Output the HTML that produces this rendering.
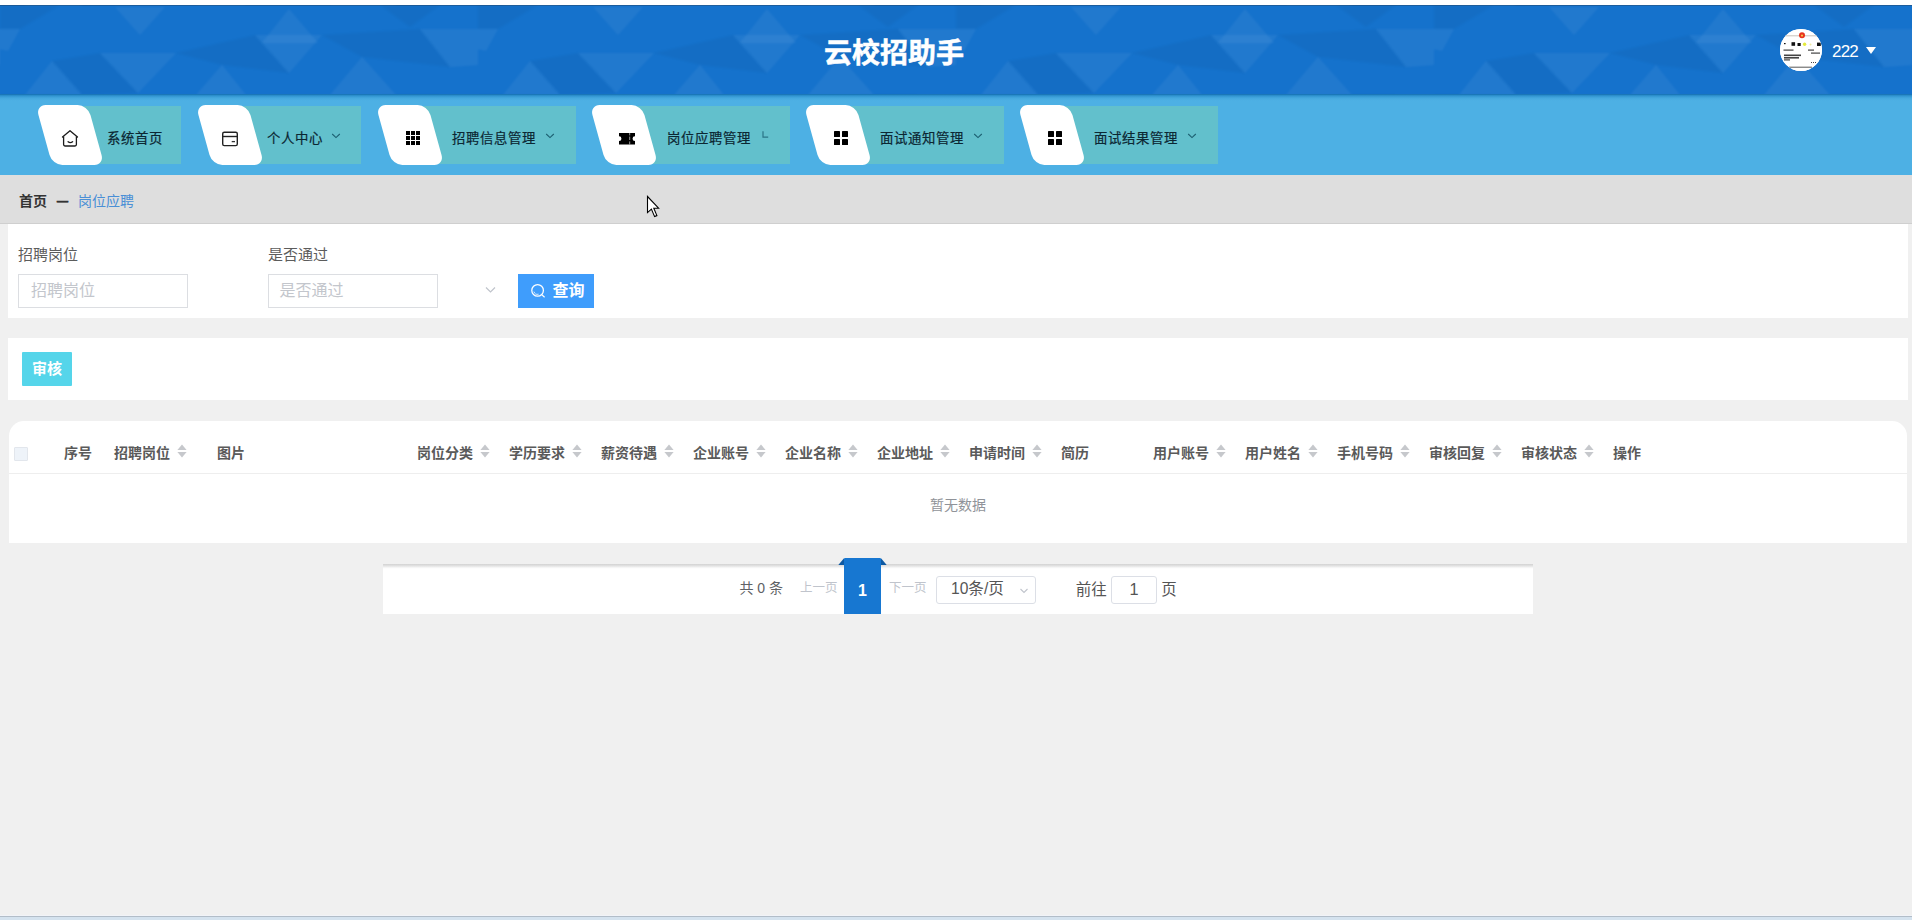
<!DOCTYPE html>
<html lang="zh-CN">
<head>
<meta charset="utf-8">
<title>云校招助手</title>
<style>
*{box-sizing:border-box;margin:0;padding:0}
html,body{width:1912px;height:920px;overflow:hidden;background:#f0f0f0}
body{position:relative;font-family:"Liberation Sans","Noto Sans CJK SC",sans-serif;color:#333;font-size:14px}
.abs{position:absolute}
#topstrip{left:0;top:0;width:1912px;height:5px;background:#fff}
#header{left:0;top:5px;width:1912px;height:90px;background:#1572cc;overflow:hidden;box-shadow:inset 0 1px 0 #1b5c9c}
#header svg{position:absolute;left:0;top:0}
#title{left:0;top:7.5px;-webkit-text-stroke:0.5px #fff;width:1788px;height:90px;line-height:92px;text-align:center;color:#fff;font-size:28px;font-weight:bold;letter-spacing:0}
#avatar{left:1780px;top:29px;width:42px;height:42px;border-radius:50%;background:#fff;overflow:hidden}
#uname{left:1832px;top:38.7px;color:#fff;font-size:17px;line-height:26px;letter-spacing:-0.8px}
#caret{left:1866px;top:46.7px;width:0;height:0;border-left:5px solid transparent;border-right:5px solid transparent;border-top:7px solid #fff}
#menubar{left:0;top:94px;width:1912px;height:81px;background:#4db0e4}
#menushadow{left:0;top:94px;width:1912px;height:8px;background:linear-gradient(rgba(14,104,172,.95),rgba(30,130,195,.62) 22%,rgba(50,150,210,.32) 50%,rgba(70,165,220,.1) 78%,rgba(77,176,228,0))}
.mi{position:absolute;top:105px;height:60px}
.mi .teal{position:absolute;left:45px;top:0.6px;right:0;height:58px;background:#62c0cc}
.mi .para{position:absolute;left:6px;top:0;width:52.4px;height:60px;background:#fff;border-radius:10px;transform:skewX(15.5deg)}
.mi .ico{position:absolute;left:22px;top:23.5px;width:20px;height:20px}
.mi .txt{position:absolute;left:69px;top:24px;font-size:13.4px;letter-spacing:0.6px;line-height:20px;color:#0c2733;white-space:nowrap;-webkit-text-stroke:0.2px #0c2733}
.mi .arr{position:absolute;top:27px;width:10px;height:8px}
#crumb{left:0;top:175px;width:1912px;height:49px;background:#dedede;border-bottom:1px solid #cfcfcf}
#crumb .c1{position:absolute;left:19px;top:16px;font-size:14px;line-height:20px;font-weight:bold;color:#333}
#crumb .c2{position:absolute;left:57px;top:16.3px;font-size:11px;line-height:20px;font-weight:bold;color:#333;-webkit-text-stroke:0.7px #333}
#crumb .c3{position:absolute;left:78px;top:16px;font-size:14px;line-height:20px;color:#4a8fd6}
#search{left:8px;top:224px;width:1900px;height:94px;background:#fff}
.lbl{position:absolute;font-size:15px;line-height:20px;color:#5c5c5c}
.inp{position:absolute;height:34px;border:1px solid #dcdee2;background:#fff;font-size:16px;line-height:32px;color:#c3c6cc;padding-left:12px}
#qbtn{left:518px;top:274px;width:76px;height:34px;background:#3f9dfc;color:#fff;font-size:16px;font-weight:bold;line-height:33px}
#actions{left:8px;top:338px;width:1900px;height:62px;background:#fff}
#sh{left:22px;top:352px;width:50px;height:34px;background:#55d5ea;color:#fff;font-size:15px;font-weight:bold;line-height:34.4px;text-align:center;border-radius:1px}
#table{left:9px;top:421px;width:1898px;height:122px;background:#fff;border-radius:15px 15px 0 0}
#thline{left:9px;top:473px;width:1898px;height:1px;background:#eeeeee}
.th{position:absolute;top:443px;font-size:14px;line-height:20px;font-weight:bold;color:#5a5a5a;white-space:nowrap}
.sort{position:absolute;top:444.3px;width:10px;height:14px}
#cb{left:14px;top:447px;width:14px;height:14px;border:1px solid #e2e6ec;background:#eef3f9;border-radius:1px}
#empty{left:9px;top:495px;width:1898px;text-align:center;font-size:14px;line-height:20px;color:#909399}
#pager{left:383px;top:564px;width:1150px;height:50px;background:linear-gradient(#d3d3d3,#dcdcdc 1.2px,#ededed 2.8px,#fbfbfb 4px,#fff 5px)}
.pg{position:absolute;font-size:14px;line-height:20px;white-space:nowrap}
#pcur{left:844px;top:558px;width:37px;height:56px;background:#1777d1;border-radius:1px 1px 0 0;color:#fff;font-size:16px;font-weight:bold;text-align:center;line-height:66.4px}
#psel{left:936px;top:576px;width:100px;height:28px;border:1px solid #dcdfe6;border-radius:3px;background:#fff;font-size:15.6px;line-height:24px;color:#555}
#pinp{left:1111px;top:576px;width:46px;height:28px;border:1px solid #dcdfe6;border-radius:3px;background:#fff;font-size:16.3px;line-height:25.4px;color:#555;text-align:center}
#botline{left:0;top:915px;width:1912px;height:2px;background:linear-gradient(#f1f3f8 0,#f1f3f8 50%,#b2bdc8 50%)}
#botstrip{left:0;top:917px;width:1912px;height:3px;background:#d4e2ee}
</style>
</head>
<body>
<div class="abs" id="topstrip"></div>
<div class="abs" id="header"><svg width="1912" height="90" viewBox="0 0 1912 90"><defs><pattern id="tp" width="478" height="90" patternUnits="userSpaceOnUse"><g fill="#fff" fill-opacity="0.055"><path d="M25 90L52 56L82 90Z"/><path d="M100 48H176L138 88Z"/><path d="M255 30H322L289 68Z"/><path d="M262 38L289 4L318 38Z"/><path d="M115 2H165L140 30Z"/><path d="M420 24H478V60L450 62Z"/><path d="M0 24H20L8 46L0 44Z"/><path d="M330 90L362 52L396 90Z"/><path d="M196 90L222 60L246 90Z"/></g><g fill="#000" fill-opacity="0.035"><path d="M52 56L100 48L138 88L82 90Z"/><path d="M176 48L255 30L289 68L222 60Z"/><path d="M322 30L420 24L450 62L362 52Z"/><path d="M0 0H60L20 24H0Z"/><path d="M380 0H440L410 22Z"/></g></pattern></defs><rect x="-10" y="-10" width="1932" height="110" fill="url(#tp)" style="filter:blur(1.3px)"/></svg></div>
<div class="abs" id="title">云校招助手</div>
<div class="abs" id="avatar"><svg width="42" height="42" viewBox="0 0 42 42"><rect width="42" height="42" fill="#fff"/><path d="M4 6.8H38" stroke="#b9b2a8" stroke-width="0.8"/><circle cx="22" cy="6.3" r="3" fill="#e8341c"/><circle cx="22" cy="6.6" r="1.1" fill="#f6c04a"/><g fill="#111"><rect x="4" y="14" width="1.6" height="1.2"/><rect x="11.5" y="13.2" width="3.6" height="3.6"/><rect x="17.5" y="14" width="3.2" height="3"/><rect x="37" y="13.6" width="3.8" height="3.4"/></g><circle cx="24.6" cy="15.2" r="1.7" fill="#e4ea3c"/><circle cx="30.5" cy="15.4" r="1" fill="#efe9a0"/><g fill="#444"><rect x="3.5" y="20.5" width="10" height="1.2"/><rect x="28" y="20.5" width="6" height="1.2"/><rect x="31" y="23.5" width="9" height="1.2"/><rect x="4" y="25.5" width="17" height="1.6"/><rect x="4" y="28" width="15" height="1.6"/><rect x="4" y="30.3" width="6" height="1.2"/><rect x="31" y="33" width="1" height="1"/><rect x="33" y="33" width="1" height="1"/><rect x="35" y="33" width="1" height="1"/></g><path d="M9 38.2H32" stroke="#444" stroke-width="0.9"/></svg></div>
<div class="abs" id="uname">222</div>
<div class="abs" id="caret"></div>
<div class="abs" id="menubar"></div>
<div class="abs" id="menushadow"></div>

<div class="mi" style="left:38px;width:143px"><div class="teal"></div><div class="para"></div><svg class="ico" style="left:22px" viewBox="0 0 20 20"><path d="M2.5 8.1L10 1.7L17.5 8.1" fill="none" stroke="#1c1c1c" stroke-width="1.3" stroke-linejoin="round" stroke-linecap="round"/><path d="M3.6 7.4V15.6Q3.6 17 5 17H15Q16.4 17 16.4 15.6V7.4" fill="none" stroke="#1c1c1c" stroke-width="1.3"/><path d="M8.1 12.7Q10.3 14.5 12.6 12.7" fill="none" stroke="#1c1c1c" stroke-width="1.3" stroke-linecap="round"/></svg><span class="txt" style="left:69px">系统首页</span></div>
<div class="mi" style="left:198px;width:163px"><div class="teal"></div><div class="para"></div><svg class="ico" style="left:22px" viewBox="0 0 20 20"><rect x="2.7" y="3.2" width="14.6" height="13.4" rx="1.6" fill="none" stroke="#222" stroke-width="1.4"/><path d="M2.7 7.5H17.3" stroke="#222" stroke-width="1.4"/><path d="M11.7 12.6H15" stroke="#333" stroke-width="1.3"/></svg><span class="txt" style="left:69px">个人中心</span><svg class="arr" style="left:133px" viewBox="0 0 10 8"><path d="M1.2 2L5 5.6L8.8 2" fill="none" stroke="#1d6072" stroke-width="1.1"/></svg></div>
<div class="mi" style="left:378px;width:198px"><div class="teal"></div><div class="para"></div><svg class="ico" style="left:25px;top:22.6px" viewBox="0 0 20 20"><g fill="#000"><rect x="3" y="3" width="4" height="4"/><rect x="8" y="3" width="4" height="4"/><rect x="13" y="3" width="4" height="4"/><rect x="3" y="8" width="4" height="4"/><rect x="8" y="8" width="4" height="4"/><rect x="13" y="8" width="4" height="4"/><rect x="3" y="13" width="4" height="4"/><rect x="8" y="13" width="4" height="4"/><rect x="13" y="13" width="4" height="4"/></g></svg><span class="txt" style="left:74px">招聘信息管理</span><svg class="arr" style="left:167px" viewBox="0 0 10 8"><path d="M1.2 2L5 5.6L8.8 2" fill="none" stroke="#1d6072" stroke-width="1.1"/></svg></div>
<div class="mi" style="left:592px;width:198px"><div class="teal"></div><div class="para"></div><svg class="ico" style="left:25px" viewBox="0 0 20 20"><path d="M2 3.9H18V7.2A2.45 2.45 0 0 0 18 12.1V15.4H2V12.1A2.45 2.45 0 0 0 2 7.2Z" fill="#000"/><path d="M12.7 3.9V6.4M12.7 7.6V11M12.7 12.4V15.4" stroke="#fff" stroke-opacity=".75" stroke-width="0.8"/></svg><span class="txt" style="left:75px">岗位应聘管理</span><svg class="arr" style="left:167.6px;top:25.8px" viewBox="0 0 10 8"><path d="M3 0.3V6.2H8.2" fill="none" stroke="#2a7486" stroke-width="1.2"/></svg></div>
<div class="mi" style="left:806px;width:198px"><div class="teal"></div><div class="para"></div><svg class="ico" style="left:25px;top:22.6px" viewBox="0 0 20 20"><g fill="#000"><rect x="3" y="3" width="6" height="6" rx="0.6"/><rect x="11" y="3" width="6" height="6" rx="0.6"/><rect x="3" y="11" width="6" height="6" rx="0.6"/><rect x="11" y="11" width="6" height="6" rx="0.6"/></g></svg><span class="txt" style="left:74px">面试通知管理</span><svg class="arr" style="left:167px" viewBox="0 0 10 8"><path d="M1.2 2L5 5.6L8.8 2" fill="none" stroke="#1d6072" stroke-width="1.1"/></svg></div>
<div class="mi" style="left:1020px;width:198px"><div class="teal"></div><div class="para"></div><svg class="ico" style="left:25px;top:22.6px" viewBox="0 0 20 20"><g fill="#000"><rect x="3" y="3" width="6" height="6" rx="0.6"/><rect x="11" y="3" width="6" height="6" rx="0.6"/><rect x="3" y="11" width="6" height="6" rx="0.6"/><rect x="11" y="11" width="6" height="6" rx="0.6"/></g></svg><span class="txt" style="left:74px">面试结果管理</span><svg class="arr" style="left:167px" viewBox="0 0 10 8"><path d="M1.2 2L5 5.6L8.8 2" fill="none" stroke="#1d6072" stroke-width="1.1"/></svg></div>

<div class="abs" id="crumb"><span class="c1">首页</span><span class="c2">—</span><span class="c3">岗位应聘</span></div>

<svg class="abs" style="left:646px;top:195px" width="16" height="24" viewBox="0 0 16 24"><path d="M1.5 1.5V17.6L5.4 14.1L8.6 21.6L10.9 20.6L7.8 13.2H12.6Z" fill="#fff" stroke="#000" stroke-width="1.1" stroke-linejoin="miter"/></svg>
<div class="abs" id="search"></div>
<span class="lbl" style="left:18px;top:245px">招聘岗位</span>
<span class="lbl" style="left:268px;top:245px">是否通过</span>
<div class="inp" style="left:18px;top:274px;width:170px">招聘岗位</div>
<div class="inp" style="left:268px;top:274px;width:170px;padding-left:10.4px">是否通过</div>
<div class="abs" id="qbtn"><svg style="position:absolute;left:12px;top:9px" width="16" height="16" viewBox="0 0 16 16"><circle cx="7.6" cy="7.4" r="5.8" fill="none" stroke="#fff" stroke-width="1.25"/><path d="M11.7 11.6L14.6 14.3" stroke="#fff" stroke-width="1.25" fill="none"/><path d="M3.9 8.6A3.9 3.9 0 0 0 8.6 11.2" stroke="#fff" stroke-width="0.9" fill="none" stroke-opacity=".85"/></svg><span style="position:absolute;left:34.4px;top:0">查询</span></div>
<svg class="abs" style="left:485px;top:286px" width="11" height="8" viewBox="0 0 11 8"><path d="M1 1.5L5.5 6L10 1.5" fill="none" stroke="#c0c4cc" stroke-width="1.2"/></svg>

<div class="abs" id="actions"></div>
<div class="abs" id="sh">审核</div>

<div class="abs" id="table"></div>
<div class="abs" id="thline"></div>
<div class="abs" id="cb"></div>
<span class="th" style="left:64px">序号</span>
<span class="th" style="left:114px">招聘岗位</span><svg class="sort" style="left:177px" viewBox="0 0 10 14"><path d="M5 0.5L9.6 6H0.4Z" fill="#c6c8cc"/><path d="M5 13.5L9.6 8H0.4Z" fill="#c6c8cc"/></svg>
<span class="th" style="left:217px">图片</span>
<span class="th" style="left:417px">岗位分类</span><svg class="sort" style="left:480px" viewBox="0 0 10 14"><path d="M5 0.5L9.6 6H0.4Z" fill="#c6c8cc"/><path d="M5 13.5L9.6 8H0.4Z" fill="#c6c8cc"/></svg>
<span class="th" style="left:509px">学历要求</span><svg class="sort" style="left:572px" viewBox="0 0 10 14"><path d="M5 0.5L9.6 6H0.4Z" fill="#c6c8cc"/><path d="M5 13.5L9.6 8H0.4Z" fill="#c6c8cc"/></svg>
<span class="th" style="left:601px">薪资待遇</span><svg class="sort" style="left:664px" viewBox="0 0 10 14"><path d="M5 0.5L9.6 6H0.4Z" fill="#c6c8cc"/><path d="M5 13.5L9.6 8H0.4Z" fill="#c6c8cc"/></svg>
<span class="th" style="left:693px">企业账号</span><svg class="sort" style="left:756px" viewBox="0 0 10 14"><path d="M5 0.5L9.6 6H0.4Z" fill="#c6c8cc"/><path d="M5 13.5L9.6 8H0.4Z" fill="#c6c8cc"/></svg>
<span class="th" style="left:785px">企业名称</span><svg class="sort" style="left:848px" viewBox="0 0 10 14"><path d="M5 0.5L9.6 6H0.4Z" fill="#c6c8cc"/><path d="M5 13.5L9.6 8H0.4Z" fill="#c6c8cc"/></svg>
<span class="th" style="left:877px">企业地址</span><svg class="sort" style="left:940px" viewBox="0 0 10 14"><path d="M5 0.5L9.6 6H0.4Z" fill="#c6c8cc"/><path d="M5 13.5L9.6 8H0.4Z" fill="#c6c8cc"/></svg>
<span class="th" style="left:969px">申请时间</span><svg class="sort" style="left:1032px" viewBox="0 0 10 14"><path d="M5 0.5L9.6 6H0.4Z" fill="#c6c8cc"/><path d="M5 13.5L9.6 8H0.4Z" fill="#c6c8cc"/></svg>
<span class="th" style="left:1061px">简历</span>
<span class="th" style="left:1153px">用户账号</span><svg class="sort" style="left:1216px" viewBox="0 0 10 14"><path d="M5 0.5L9.6 6H0.4Z" fill="#c6c8cc"/><path d="M5 13.5L9.6 8H0.4Z" fill="#c6c8cc"/></svg>
<span class="th" style="left:1245px">用户姓名</span><svg class="sort" style="left:1308px" viewBox="0 0 10 14"><path d="M5 0.5L9.6 6H0.4Z" fill="#c6c8cc"/><path d="M5 13.5L9.6 8H0.4Z" fill="#c6c8cc"/></svg>
<span class="th" style="left:1337px">手机号码</span><svg class="sort" style="left:1400px" viewBox="0 0 10 14"><path d="M5 0.5L9.6 6H0.4Z" fill="#c6c8cc"/><path d="M5 13.5L9.6 8H0.4Z" fill="#c6c8cc"/></svg>
<span class="th" style="left:1429px">审核回复</span><svg class="sort" style="left:1492px" viewBox="0 0 10 14"><path d="M5 0.5L9.6 6H0.4Z" fill="#c6c8cc"/><path d="M5 13.5L9.6 8H0.4Z" fill="#c6c8cc"/></svg>
<span class="th" style="left:1521px">审核状态</span><svg class="sort" style="left:1584px" viewBox="0 0 10 14"><path d="M5 0.5L9.6 6H0.4Z" fill="#c6c8cc"/><path d="M5 13.5L9.6 8H0.4Z" fill="#c6c8cc"/></svg>
<span class="th" style="left:1613px">操作</span>
<div class="abs" id="empty">暂无数据</div>

<div class="abs" id="pager"></div>
<span class="pg" style="left:739.4px;top:578px;color:#606266;font-size:14px">共 0 条</span>
<span class="pg" style="left:800px;top:577.8px;color:#c0c4cc;font-size:12.5px">上一页</span>
<svg class="abs" style="left:838px;top:558px" width="49" height="7" viewBox="0 0 49 7"><path d="M0.3 7L6 0.3V7Z" fill="#0f5aa3"/><path d="M48.7 7L43 0.3V7Z" fill="#0f5aa3"/></svg>
<div class="abs" id="pcur">1</div>
<span class="pg" style="left:889px;top:577.8px;color:#c0c4cc;font-size:12.5px">下一页</span>
<div class="abs" id="psel"><span style="position:absolute;left:14px;top:0">10条/页</span><svg style="position:absolute;left:82px;top:10px" width="10" height="8" viewBox="0 0 10 8"><path d="M1.5 2L5 5.5L8.5 2" fill="none" stroke="#c0c4cc" stroke-width="1.1"/></svg></div>
<span class="pg" style="left:1075.7px;top:580px;color:#555;font-size:15.5px">前往</span>
<div class="abs" id="pinp">1</div>
<span class="pg" style="left:1161.3px;top:580px;color:#555;font-size:15.5px">页</span>
<div class="abs" id="botline"></div>
<div class="abs" id="botstrip"></div>
</body>
</html>
